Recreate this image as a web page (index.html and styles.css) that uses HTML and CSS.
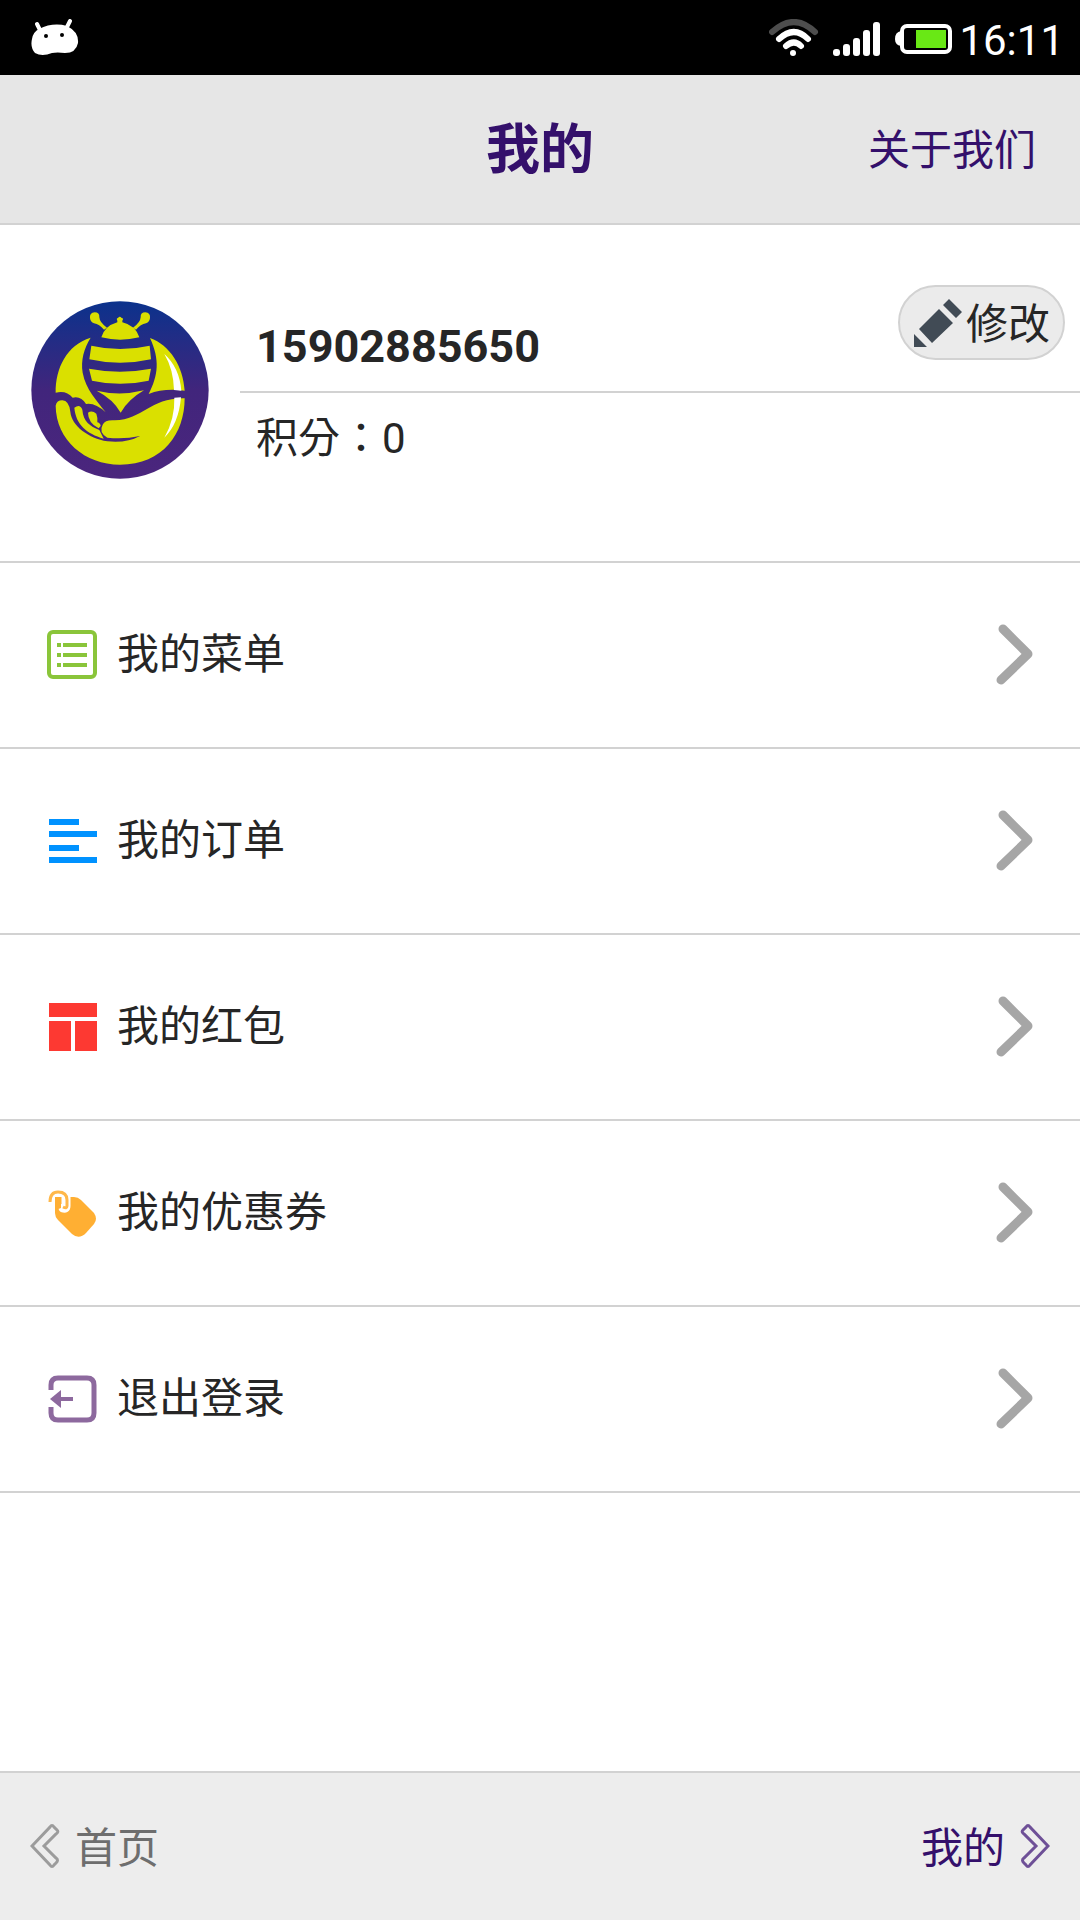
FILE: index.html
```html
<!DOCTYPE html>
<html lang="zh-CN">

<head>
    <meta charset="UTF-8">
    <meta name="viewport" content="width=device-width, initial-scale=1.0">
    <title>我的</title>
    <link rel="stylesheet" href="styles.css">
</head>

<body>
    <div class="status-bar">
        <svg class="status-android" width="48" height="38" viewBox="0 0 48 38" fill="#fff">
            <path d="M6 5L9 11M39 2L36 8" stroke="#fff" stroke-width="4" stroke-linecap="round" />
            <path d="M8 10Q22 3 36 7Q48 13 47 24Q45 34 34 34Q26 33 21 34Q11 38 4 34Q-1 28 1 20Q2 13 8 10Z" />
            <circle cx="15" cy="17" r="2" fill="#000" />
            <circle cx="31" cy="16" r="2" fill="#000" />
        </svg>
        <div class="status-right">
            <svg width="50" height="38" viewBox="0 0 50 38" fill="none" stroke="#fff" stroke-width="6" stroke-linecap="round">
                <path d="M3 13Q25 -7 46 13" stroke="#4d4d4d" />
                <path d="M10 20Q25 6 39 20M17 27Q25 20 32 27" />
                <circle cx="24" cy="34" r="3" fill="#fff" stroke="none" />
            </svg>
            <svg width="48" height="38" viewBox="0 0 48 38" fill="#fff">
                <rect x="0" y="30" width="7" height="7" rx="3" />
                <rect x="10" y="25" width="7" height="12" rx="3" />
                <rect x="20" y="19" width="7" height="18" rx="3" />
                <rect x="30" y="11" width="7" height="26" rx="3" />
                <rect x="40" y="3" width="7" height="34" rx="3" />
            </svg>
            <svg width="58" height="38" viewBox="0 0 58 38">
                <path d="M6 12Q0 13 0 20Q0 26 6 27Z" fill="#fff" />
                <rect x="7" y="7" width="48" height="26" rx="5" fill="#000" stroke="#fff" stroke-width="4" />
                <rect x="21" y="11" width="30" height="18" fill="#69e815" />
            </svg>
            <span class="status-time">16:11</span>
        </div>
    </div>

    <header class="header">
        <h1>我的</h1>
        <a class="about" href="#">关于我们</a>
    </header>

    <main>
        <section class="profile">
            <svg class="avatar" viewBox="33 33 534 534">
                <defs>
                    <linearGradient id="sky" x1="0" y1="0" x2="0" y2="1">
                        <stop offset="0" stop-color="#0b328c" />
                        <stop offset="0.5" stop-color="#41257c" />
                        <stop offset="1" stop-color="#4b267d" />
                    </linearGradient>
                </defs>
                <circle cx="300" cy="300" r="266" fill="url(#sky)" />
                <g fill="#dae000">
                    <path d="M244 142Q254 108 292 97V92Q288 84 294 84Q299 76 305 84Q312 84 307 92V97Q346 106 358 142Q300 156 244 142Z" />
                    <path d="M210 84Q208 69 224 67Q239 67 238 82Q239 98 261 113L252 119Q238 103 222 100Q211 96 210 84Z" />
                    <path d="M390 84Q392 69 376 67Q361 67 362 82Q361 98 339 113L348 119Q362 103 378 100Q389 96 390 84Z" />
                    <path d="M214 167Q300 187 389 167L393 208Q300 229 208 208Z" />
                    <path d="M207 236Q300 254 393 236L386 272Q300 291 216 272Z" />
                    <path d="M230 302Q300 319 372 301Q325 328 302 368Q280 328 230 302Z" />
                    <path d="M212 143C140 165 106 235 107 308Q139 300 158 323Q183 317 198 342Q225 337 257 367C230 330 198 300 188 248C182 210 192 175 212 143Z" />
                    <path d="M390 144C450 165 490 230 494 302Q432 294 386 312C415 255 420 210 390 144Z" />
                    <path d="M107 347Q110 331 127 331Q147 332 151 365C155 408 205 444 262 454Q320 460 360 438Q310 449 262 443Q235 427 248 404Q255 389 284 391C370 389 390 323 494 325C494 430 430 524 300 524C195 524 108 450 107 347Z" />
                    <path d="M163 353Q180 340 187 359C190 395 210 408 238 420L251 446C200 430 168 405 163 353Z" />
                    <path d="M204 368Q216 360 229 371Q234 385 232 397Q242 400 242 408L236 415Q204 398 204 368Z" />
                </g>
                <g fill="#fff">
                    <path d="M433 192Q478 232 484 302L462 300Q460 237 433 192Z" />
                    <path d="M463 323L483 322Q476 402 433 443Q465 387 463 323Z" />
                </g>
            </svg>
            <div class="info">
                <div class="info-top">
                    <strong class="phone">15902885650</strong>
                    <button class="edit" type="button">
                        <svg width="48" height="48" viewBox="0 0 48 48" fill="#414b55">
                            <path d="M35 0L48 13L42 19L29 6ZM25 10L39 24L18 44L5 30ZM0 35L13 48H0Z" />
                        </svg>
                        <span>修改</span>
                    </button>
                </div>
                <p class="score" lang="zh-TW">积分：0</p>
            </div>
        </section>

        <nav class="menu">
            <a href="#">
                <svg class="icon" viewBox="0 0 50 50" fill="none" stroke="#8ac53a" stroke-width="4">
                    <rect x="2" y="2" width="46" height="45" rx="4" />
                    <path d="M10 15H14M16 15H40M10 25H14M16 25H40M10 35H14M16 35H40" />
                </svg>
                <span>我的菜单</span>
                <svg class="arrow" viewBox="0 0 38 62"><path d="M7 5L32 30L5 56" /></svg>
            </a>
            <a href="#">
                <svg class="icon" viewBox="0 0 50 50" fill="#0092ff">
                    <path d="M2 3H32V9H2ZM2 15H50V21H2ZM2 29H32V35H2ZM2 41H50V47H2Z" />
                </svg>
                <span>我的订单</span>
                <svg class="arrow" viewBox="0 0 38 62"><path d="M7 5L32 30L5 56" /></svg>
            </a>
            <a href="#">
                <svg class="icon" viewBox="0 0 50 50" fill="#fd3932">
                    <path d="M2 1H50V15H2ZM2 19H24V49H2ZM28 19H50V49H28Z" />
                </svg>
                <span>我的红包</span>
                <svg class="arrow" viewBox="0 0 38 62"><path d="M7 5L32 30L5 56" /></svg>
            </a>
            <a href="#">
                <svg class="icon" viewBox="0 0 50 50">
                    <path d="M8 9H27Q31 9 34 12L47 25Q51 31 47 36L39 45Q32 52 25 46L11 32Q8 29 8 25Z" fill="#ffaf33" />
                    <path d="M19 8V18Q19 21 16 20" fill="none" stroke="#fff" stroke-width="9" stroke-linecap="round" />
                    <path d="M8 9H14V20Q10 22 8 20Z" fill="#ffaf33" />
                    <path d="M3 14Q3 4 11 4Q20 4 20 12V18Q20 21 16 19" fill="none" stroke="#ffb84a" stroke-width="3" />
                </svg>
                <span>我的优惠券</span>
                <svg class="arrow" viewBox="0 0 38 62"><path d="M7 5L32 30L5 56" /></svg>
            </a>
            <a href="#">
                <svg class="icon" viewBox="0 0 50 50" fill="none" stroke="#8d699e" stroke-width="5">
                    <path d="M4 16V11Q4 4 11 4H40Q47 4 47 11V39Q47 46 40 46H11Q4 46 4 39V33" />
                    <path d="M12 25H26" stroke-width="4" />
                    <path d="M3 25L14 16V34Z" fill="#8d699e" stroke="none" />
                </svg>
                <span>退出登录</span>
                <svg class="arrow" viewBox="0 0 38 62"><path d="M7 5L32 30L5 56" /></svg>
            </a>
        </nav>
    </main>

    <footer class="footer">
        <a class="home" href="#">
            <svg width="30" height="46" viewBox="0 0 30 46">
                <path d="M2 22L20 3Q22 0 24 3L27 6Q29 8 26 10L14 22L26 34Q29 36 26 39L24 41Q22 44 20 41Z" />
            </svg>
            <span>首页</span>
        </a>
        <a class="mine" href="#">
            <span>我的</span>
            <svg width="30" height="46" viewBox="0 0 30 46">
                <path d="M28 22L10 3Q8 0 6 3L3 6Q1 8 4 10L16 22L4 34Q1 36 4 39L6 41Q8 44 10 41Z" />
            </svg>
        </a>
    </footer>
</body>

</html>
```
FILE: styles.css
```css
* {
    box-sizing: border-box;
}

body {
    display: flex;
    flex-direction: column;
    min-height: 100vh;
    margin: 0;
    background-color: #fff;
    color: #262626;
    font-family: Roboto, "Noto Sans CJK SC", sans-serif;
    font-size: 42px;
    line-height: 60px;
}

a {
    color: inherit;
    text-decoration: none;
}

svg {
    display: block;
    flex-shrink: 0;
}

.status-bar {
    display: flex;
    justify-content: space-between;
    align-items: center;
    height: 75px;
    padding: 0 16px 0 31px;
    background-color: #000;
    color: #fff;
}

.status-right {
    display: flex;
    align-items: center;
    gap: 14px;
}

.status-time {
    margin-left: -8px;
    padding-top: 6px;
}

.header {
    display: grid;
    grid-template-columns: 1fr auto 1fr;
    align-items: center;
    height: 150px;
    padding: 4px 44px 0;
    background-color: #e6e6e6;
    border-bottom: 2px solid #d2d2d2;
    color: #34106b;
}

.header h1 {
    grid-column: 2;
    margin: 0;
    font-size: 54px;
}

.about {
    justify-self: end;
}

.profile {
    display: flex;
    gap: 31px;
    height: 338px;
    padding-left: 31px;
    border-bottom: 2px solid #d2d2d2;
}

.avatar {
    width: 178px;
    height: 178px;
    margin-top: 76px;
}

.info {
    flex: 1;
}

.info-top {
    display: flex;
    justify-content: space-between;
    align-items: flex-end;
    height: 168px;
    padding: 0 15px 14px 16px;
    border-bottom: 2px solid #d2d2d2;
}

.phone {
    font-size: 45px;
}

.edit {
    display: flex;
    align-items: center;
    gap: 4px;
    height: 75px;
    margin-bottom: 17px;
    padding: 0 13px 0 14px;
    border: 2px solid #d2d2d2;
    border-radius: 38px;
    background-color: #ebebeb;
    color: inherit;
    font: inherit;
    cursor: pointer;
}

.edit span {
    padding-top: 4px;
}

/* the TC face sets the full-width colon in the middle of its box */
.score {
    margin: 0;
    padding: 16px;
    font-family: Roboto, "Noto Sans CJK TC", sans-serif;
}

.menu a {
    display: flex;
    align-items: center;
    height: 186px;
    padding: 0 46px 0 47px;
    border-bottom: 2px solid #d2d2d2;
}

.menu span {
    flex: 1;
    padding-left: 20px;
}

.icon {
    width: 50px;
    height: 50px;
}

.arrow {
    width: 38px;
    height: 62px;
    fill: none;
    stroke: #a6a6a6;
    stroke-width: 9;
    stroke-linecap: round;
    stroke-linejoin: round;
}

.footer {
    display: flex;
    justify-content: space-between;
    align-items: center;
    height: 149px;
    margin-top: auto;
    padding: 0 30px;
    background-color: #ededed;
    border-top: 2px solid #d2d2d2;
}

.footer a {
    display: flex;
    align-items: center;
    gap: 15px;
}

.footer span {
    padding-top: 4px;
}

.footer path {
    fill: none;
    stroke-width: 3;
}

.home {
    color: #6e6e6e;
}

.home path {
    stroke: #9c9c9c;
}

.mine {
    color: #34106b;
}

.mine path {
    stroke: #6e5097;
}
```
